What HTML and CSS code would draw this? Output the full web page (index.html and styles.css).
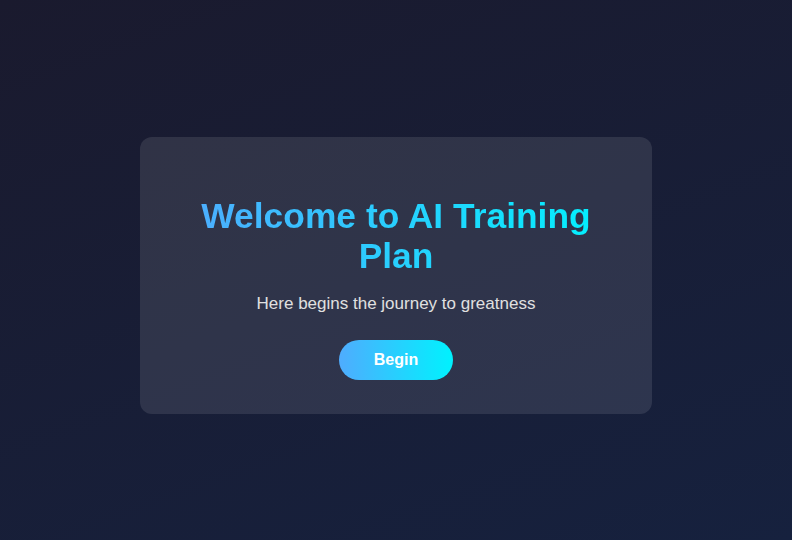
FILE: index.html
```html
<!DOCTYPE html>
<html lang="en">
<head>
<meta charset="utf-8">
<title>AI Training Plan</title>
<link rel="stylesheet" href="styles.css">
</head>
<body>
<main class="card">
  <h1 class="title">Welcome to AI Training Plan</h1>
  <p class="subtitle">Here begins the journey to greatness</p>
  <button class="begin">Begin</button>
</main>
</body>
</html>
```
FILE: styles.css
```css
html, body {
  margin: 0;
  padding: 0;
}
body {
  min-height: 100vh;
  box-sizing: border-box;
  padding-top: 11px;
  display: flex;
  align-items: center;
  justify-content: center;
  background: linear-gradient(160deg, #1a1a2e 0%, #16213e 100%);
  font-family: "Liberation Sans", Arial, sans-serif;
  color: #e0e0e0;
}
.card {
  width: 512px;
  box-sizing: border-box;
  padding: 35px 40px 34px;
  background: rgba(255, 255, 255, 0.1);
  border-radius: 12px;
  text-align: center;
  display: flex;
  flex-direction: column;
  align-items: center;
}
.title {
  margin: 24px 0 18px;
  font-size: 35.4px;
  line-height: 40px;
  font-weight: bold;
  background: linear-gradient(90deg, #4facfe 0%, #00f2fe 100%);
  -webkit-background-clip: text;
  background-clip: text;
  color: transparent;
}
.subtitle {
  margin: 0 0 26px;
  font-size: 17px;
  color: #e0e0e0;
}
.begin {
  border: none;
  border-radius: 30px;
  padding: 11px 35px;
  font-family: "Liberation Sans", Arial, sans-serif;
  font-size: 16px;
  font-weight: bold;
  color: #ffffff;
  background: linear-gradient(90deg, #4facfe 0%, #00f2fe 100%);
  cursor: pointer;
}
```
